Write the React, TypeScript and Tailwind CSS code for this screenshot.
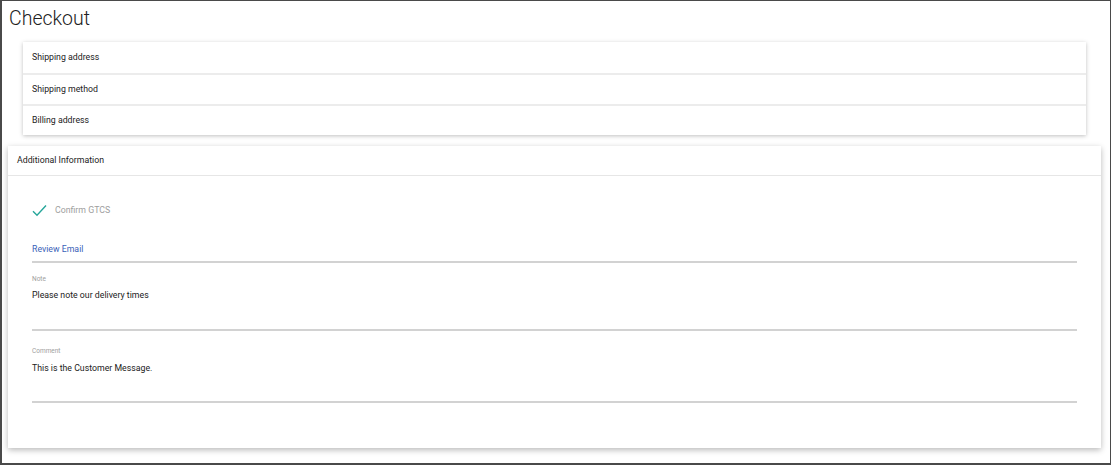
import React from 'react';

const sections = ['Shipping address', 'Shipping method', 'Billing address'];

const fields = [
  { label: 'Note', value: 'Please note our delivery times', box: 'h-[68px] pt-[11px]', gap: 'mt-[5px]' },
  { label: 'Comment', value: 'This is the Customer Message.', box: 'h-[72px] pt-[15px]', gap: 'mt-[6px]' },
];

const Check = () => (
  <svg width="15" height="13" viewBox="0 0 15 13" fill="none">
    <path d="M1 7.2 L5 11.2 L14 1.5" stroke="#26a69a" strokeWidth="1.4" />
  </svg>
);

export default function App() {
  return (
    <div
      className="w-[1111px] h-[465px] bg-white border border-l-2 border-b-2 border-[#4a4a4a] text-[#212121] overflow-hidden"
      style={{ fontFamily: 'Roboto, "Liberation Sans", sans-serif' }}
    >
      <h1 className="pl-[7px] pt-[5px] h-[41px] text-[19.5px] font-light leading-[26px]">Checkout</h1>

      <div className="ml-[21px] w-[1063px] bg-white shadow-[0_1px_4px_rgba(0,0,0,0.25)]">
        {sections.map((s, i) => (
          <div
            key={s}
            className={`h-[31px] flex items-center px-[9px] text-[8.75px] ${i > 0 ? 'border-t-2 border-[#ececec]' : ''}`}
          >
            {s}
          </div>
        ))}
      </div>

      <div className="mt-[11px] ml-[6px] w-[1093px] h-[302px] bg-white shadow-[0_2px_6px_rgba(0,0,0,0.28)]">
        <div className="h-[30px] flex items-center px-[9px] text-[8.75px] border-b border-[#e6e6e6]">
          Additional Information
        </div>

        <div className="pl-[24px] pr-[24px]">
          <div className="h-[66px] flex items-center gap-[8px] pt-[3px]">
            <Check />
            <span className="text-[8.75px] text-[#9e9e9e]">Confirm GTCS</span>
          </div>

          <div className="h-[21px] flex items-center pb-[3px] text-[8.75px] text-[#3a62b8] border-b-2 border-[#d2d2d2]">
            Review Email
          </div>

          {fields.map((f) => (
            <div key={f.label} className={`flex flex-col border-b-2 border-[#d2d2d2] ${f.box}`}>
              <span className="text-[6.5px] text-[#9e9e9e] leading-[10px]">{f.label}</span>
              <span className={`text-[8.75px] leading-[12px] ${f.gap}`}>{f.value}</span>
            </div>
          ))}
        </div>
      </div>
    </div>
  );
}
